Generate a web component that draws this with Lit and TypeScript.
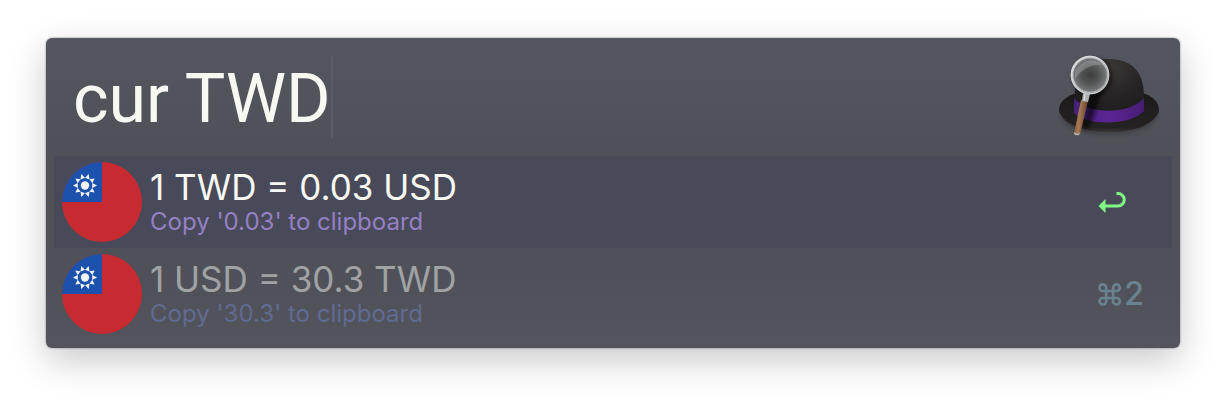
import { LitElement, html, svg, css } from "lit";
import { customElement, property, state } from "lit/decorators.js";
import { classMap } from "lit/directives/class-map.js";

interface Result {
  title: string;
  subtitle: string;
  shortcut: string;
}

@customElement("taiwan-flag")
class TaiwanFlag extends LitElement {
  static styles = css`
    :host { display: block; }
    .flag { display: block; width: 80px; height: 80px; border-radius: 50%; }
  `;

  render() {
    const rays = Array.from({ length: 10 }, (_, i) =>
      svg`<path d="M-2.4-7.2L0-12L2.4-7.2Z" transform="translate(23 23.5) rotate(${i * 36 + 18})" fill="#f2f3f5"/>`);
    return html`
      <svg class="flag" viewBox="0 0 80 80" aria-hidden="true">
        <rect width="80" height="80" fill="#c82a31"></rect>
        <rect width="40" height="40" fill="#1c52ad"></rect>
        ${rays}
        <circle cx="23" cy="23.5" r="7" fill="#1c52ad"></circle>
        <circle cx="23" cy="23.5" r="4.2" fill="#f2f3f5"></circle>
      </svg>`;
  }
}

@customElement("bowler-hat")
class BowlerHat extends LitElement {
  static styles = css`
    :host { display: block; }
    .hat { display: block; width: 104px; height: 84px; }
  `;

  render() {
    return html`
      <svg class="hat" viewBox="0 0 104 84" aria-hidden="true">
        <defs>
          <radialGradient id="crown" cx="0.55" cy="0.15" r="0.8">
            <stop offset="0" stop-color="#3a3837"></stop>
            <stop offset="0.5" stop-color="#272525"></stop>
            <stop offset="1" stop-color="#1c1a1b"></stop>
          </radialGradient>
          <linearGradient id="brim" x1="0" y1="0" x2="0" y2="1">
            <stop offset="0" stop-color="#1b191a"></stop>
            <stop offset="0.85" stop-color="#242223"></stop>
            <stop offset="1" stop-color="#454344"></stop>
          </linearGradient>
          <linearGradient id="band" x1="0" y1="0" x2="1" y2="0">
            <stop offset="0" stop-color="#46207a"></stop>
            <stop offset="0.5" stop-color="#5c2596"></stop>
            <stop offset="1" stop-color="#461d73"></stop>
          </linearGradient>
          <radialGradient id="glass">
            <stop offset="0" stop-color="#3f3f3f"></stop>
            <stop offset="0.5" stop-color="#515252"></stop>
            <stop offset="1" stop-color="#787a7b"></stop>
          </radialGradient>
          <linearGradient id="rim" x1="0" y1="0" x2="1" y2="1">
            <stop offset="0" stop-color="#d8d9da"></stop>
            <stop offset="0.5" stop-color="#bfc0c1"></stop>
            <stop offset="1" stop-color="#a1a2a4"></stop>
          </linearGradient>
          <linearGradient id="handle" x1="0" y1="0" x2="1" y2="0.2">
            <stop offset="0" stop-color="#6f4a30"></stop>
            <stop offset="0.45" stop-color="#a87a55"></stop>
            <stop offset="1" stop-color="#62402a"></stop>
          </linearGradient>
          <filter id="soft" x="-30%" y="-30%" width="160%" height="160%">
            <feGaussianBlur stdDeviation="2"></feGaussianBlur>
          </filter>
        </defs>
        <ellipse cx="52" cy="60" rx="49" ry="21" fill="#000" opacity="0.15" filter="url(#soft)"></ellipse>
        <path d="M2 55C2 46 11 40 20 38L85 38C94 40 102 46 102 55C101 68 79 79 51 79C24 79 3 68 2 55Z" fill="url(#brim)"></path>
        <path d="M3 59C8 70 28 78 52 78C76 78 96 70 101 59" fill="none" stroke="#4b494a" stroke-width="1"></path>
        <path d="M17 58C16 28 22 4 51 4C79 4 87 21 87 42V58C76 69 28 70 17 58Z" fill="url(#crown)"></path>
        <path d="M17 43C30 60 73 60 87 43V56C74 71 29 71 17 58Z" fill="url(#band)"></path>
        <path d="M31 40C42 34 52 27 53 15L42 44C39 57 36 67 29 76L26 70Z" fill="#000" opacity="0.6" filter="url(#soft)"></path>
        <circle cx="35" cy="22" r="18" fill="none" stroke="#000" stroke-width="3" opacity="0.7" filter="url(#soft)"></circle>
        <path d="M24 45L31 46L23 79Q19 81 17 78Z" fill="url(#handle)"></path>
        <path d="M17 77Q20 80 23 78L22 80Q19 81 17 79Z" fill="#b9b4b0"></path>
        <path d="M26 38L33 39L31 47L25 46Z" fill="#aeb0b2"></path>
        <path d="M28 39L27 46" stroke="#e0e1e2" stroke-width="1"></path>
        <circle cx="33" cy="20" r="17" fill="url(#glass)"></circle>
        <path d="M18 20C19 8 35 0 46 10C34 9 25 14 18 24Z" fill="#aeb0b1" opacity="0.4"></path>
        <circle cx="33" cy="20" r="18" fill="none" stroke="url(#rim)" stroke-width="2.6"></circle>
        <circle cx="33" cy="20" r="18.8" fill="none" stroke="#e4e4e5" stroke-width="0.6"></circle>
      </svg>`;
  }
}

@customElement("result-row")
class ResultRow extends LitElement {
  @property({ attribute: false }) result!: Result;
  @property({ type: Boolean }) selected = false;

  static styles = css`
    :host { display: block; }
    .row {
      display: flex;
      align-items: center;
      gap: 8px;
      width: 100%;
      min-height: 92px;
      padding: 6px 28px 6px 8px;
      box-sizing: border-box;
      border: 0;
      background: transparent;
      color: #a1a2a3;
      font-family: Inter, "Liberation Sans", sans-serif;
      text-align: left;
      cursor: pointer;
    }
    .row.selected { background: #484a5a; color: #f8f8f2; }
    .texts { flex: 1; min-width: 0; padding-top: 2px; }
    .title { display: block; font-size: 35px; line-height: 38px; }
    .subtitle { display: block; font-size: 24px; line-height: 32px; color: #5f6b92; }
    .selected .subtitle { color: #9580c4; }
    .shortcut {
      display: flex;
      align-items: center;
      gap: 3px;
      width: 46px;
      font-family: inherit;
      font-size: 32px;
      line-height: 36px;
      font-weight: 500;
      color: #698290;
    }
    .enter { display: block; width: 28px; height: 24px; }
    .command { display: block; width: 25px; height: 25px; }
  `;

  render() {
    const { title, subtitle, shortcut } = this.result;
    return html`
      <button type="button" class=${classMap({ row: true, selected: this.selected })}>
        <taiwan-flag></taiwan-flag>
        <span class="texts">
          <span class="title">${title}</span>
          <span class="subtitle">${subtitle}</span>
        </span>
        <kbd class="shortcut">
          ${this.selected
            ? html`<svg class="enter" viewBox="0 0 28 24" role="img" aria-label="Return">
                <path d="M18.5 3.5H20A6.2 6.2 0 0 1 20 16H7" fill="none" stroke="#80f982" stroke-width="3"></path>
                <path d="M0.5 16L7.5 9V23Z" fill="#80f982"></path>
              </svg>`
            : html`<svg class="command" viewBox="0 0 25 25" role="img" aria-label="Command">
                <path d="M8.8 8.8H16.2V16.2H8.8ZM8.8 8.8V5.3A3.6 3.6 0 1 0 5.2 8.8H8.8M16.2 8.8H19.8A3.6 3.6 0 1 0 16.2 5.2V8.8M16.2 16.2V19.8A3.6 3.6 0 1 0 19.8 16.2H16.2M8.8 16.2H5.2A3.6 3.6 0 1 0 8.8 19.8V16.2" fill="none" stroke="currentColor" stroke-width="2.8"></path>
              </svg>${shortcut}`}
        </kbd>
      </button>`;
  }
}

@customElement("app-root")
class AppRoot extends LitElement {
  @state() private query = "cur TWD";

  private results: Result[] = [
    { title: "1 TWD = 0.03 USD", subtitle: "Copy '0.03' to clipboard", shortcut: "" },
    { title: "1 USD = 30.3 TWD", subtitle: "Copy '30.3' to clipboard", shortcut: "2" },
  ];

  static styles = css`
    :host {
      display: block;
      min-height: 100vh;
      padding: 38px 46px 54px;
      box-sizing: border-box;
      background: #fff;
      font-family: Inter, "Liberation Sans", sans-serif;
    }
    .panel {
      padding-bottom: 8px;
      border-radius: 6px;
      background: linear-gradient(#54565f, #505158 35%, #505158 75%, #53545c);
      box-shadow: 0 0 2px rgba(0, 0, 0, 0.5), 0 12px 36px rgba(0, 0, 0, 0.22);
    }
    .search {
      display: flex;
      align-items: center;
      justify-content: space-between;
      height: 118px;
      padding: 0 19px 0 27px;
      box-sizing: border-box;
    }
    .query {
      field-sizing: content;
      height: 82px;
      padding: 4px 0 0;
      box-sizing: border-box;
      border: 0;
      border-right: 2px solid #5b5c65;
      outline: none;
      background: transparent;
      color: #f8f8f2;
      font: 400 68px/78px Roboto, "Liberation Sans", sans-serif;
    }
    .results { margin: 0; padding: 0 8px; list-style: none; }
  `;

  private onInput(event: Event) {
    this.query = (event.target as HTMLInputElement).value;
  }

  render() {
    return html`
      <main class="panel">
        <div class="search">
          <input class="query" type="text" aria-label="Search" spellcheck="false"
            .value=${this.query} @input=${this.onInput} />
          <bowler-hat></bowler-hat>
        </div>
        <ul class="results">
          ${this.results.map((result, i) => html`
            <li><result-row .result=${result} .selected=${i === 0}></result-row></li>`)}
        </ul>
      </main>`;
  }
}
